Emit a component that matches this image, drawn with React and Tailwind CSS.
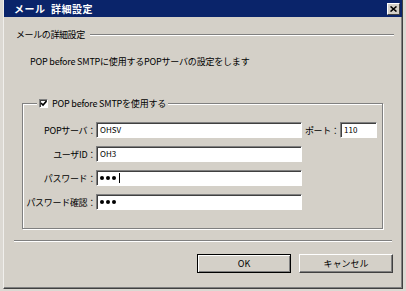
import React from "react";

const font = { fontFamily: '"Noto Sans CJK JP", "Noto Sans", sans-serif' };

function Field({ children, className = "" }) {
    return (
        <div className={`h-[16px] bg-white border-t border-l border-[#808080] border-b border-r border-b-white border-r-white shadow-[inset_1px_1px_0_#404040] flex items-center pl-[3px] text-[8px] leading-none ${className}`}>
            {children}
        </div>
    );
}

function Row({ label, children }) {
    return (
        <div className="flex items-center">
            <div className="w-[73px] text-right text-[9px] leading-none tracking-[-0.3px] whitespace-nowrap">{label}</div>
            {children}
        </div>
    );
}

function Dots({ caret }) {
    return (
        <span className="flex items-center gap-[2px]">
            <span className="w-[4px] h-[4px] rounded-full bg-black" />
            <span className="w-[4px] h-[4px] rounded-full bg-black" />
            <span className="w-[4px] h-[4px] rounded-full bg-black" />
            {caret && <span className="w-[1px] h-[10px] bg-black ml-[1px]" />}
        </span>
    );
}

function Button({ children, primary }) {
    return (
        <button
            className={`w-[94px] h-[19px] bg-[#d4d0c8] text-[9px] leading-none flex items-center justify-center ${primary
                ? "border border-black shadow-[inset_1px_1px_0_white,inset_-1px_-1px_0_#808080]"
                : "border-t border-l border-white border-b border-r border-b-[#404040] border-r-[#404040] shadow-[inset_-1px_-1px_0_#808080]"
                }`}
        >
            {children}
        </button>
    );
}

export default function App() {
    return (
        <div className="w-[406px] h-[291px] bg-[#dcd9d3] px-[3px] pb-[2px] text-black" style={font}>
            <div className="h-full flex flex-col bg-[#d4d0c8] border-l border-r border-b border-l-[#f0efec] border-r-[#404040] border-b-[#404040] shadow-[inset_-1px_-1px_0_#808080]">
                {/* title bar */}
                <div className="h-[17px] bg-[#0a246a] flex items-center justify-between pl-[10px] pr-[2px] shrink-0">
                    <span className="text-white font-bold text-[10px] leading-none tracking-[0.5px] whitespace-nowrap">メール&nbsp;&nbsp;詳細設定</span>
                    <div className="w-[13px] h-[12px] bg-[#d4d0c8] border-t border-l border-white border-b border-r border-b-[#404040] border-r-[#404040] flex items-center justify-center">
                        <svg width="7" height="6" viewBox="0 0 7 6">
                            <path d="M0.5 0.5 L6.5 5.5 M6.5 0.5 L0.5 5.5" stroke="black" strokeWidth="1.6" />
                        </svg>
                    </div>
                </div>

                {/* heading */}
                <div className="flex items-center pl-[12px] pr-[8px] mt-[12px]">
                    <span className="text-[9px] leading-[12px] tracking-[-0.4px] whitespace-nowrap">メールの詳細設定</span>
                    <div className="flex-1 ml-[5px] h-[2px] border-t border-[#808080] border-b border-b-white" />
                </div>

                <div className="pl-[26px] mt-[15px] text-[9px] leading-[12px] tracking-[-0.2px] whitespace-nowrap">
                    POP before SMTPに使用するPOPサーバの設定をします
                </div>

                {/* group box */}
                <div className="ml-[18px] mr-[19px] mt-[35px] h-[126px] border border-[#808080] shadow-[inset_1px_1px_0_white,1px_1px_0_white] flex flex-col">
                    <div className="-mt-[7px] ml-[14px] self-start bg-[#d4d0c8] flex items-center px-[2px] h-[12px]">
                        <div className="w-[9px] h-[9px] bg-white border-t border-l border-[#808080] border-b border-r border-b-white border-r-white shadow-[inset_1px_1px_0_#404040] flex items-center justify-center">
                            <svg width="7" height="7" viewBox="0 0 7 7">
                                <path d="M1 3 L3 5 L6.5 1" stroke="black" strokeWidth="1.6" fill="none" />
                            </svg>
                        </div>
                        <span className="ml-[4px] text-[9px] leading-none tracking-[-0.2px] whitespace-nowrap">POP before SMTPを使用する</span>
                    </div>

                    <div className="mt-[13px] flex flex-col gap-[8px]">
                        <Row label="POPサーバ：">
                            <Field className="w-[206px]">OHSV</Field>
                            <span className="ml-[3px] w-[35px] text-[9px] leading-none whitespace-nowrap tracking-[-0.4px]">ポート：</span>
                            <Field className="w-[37px]">110</Field>
                        </Row>
                        <Row label="ユーザID：">
                            <Field className="w-[206px]">OH3</Field>
                        </Row>
                        <Row label="パスワード：">
                            <Field className="w-[206px]"><Dots caret /></Field>
                        </Row>
                        <Row label="パスワード確認：">
                            <Field className="w-[206px]"><Dots /></Field>
                        </Row>
                    </div>
                </div>

                {/* separator */}
                <div className="mx-[10px] mt-[11px] h-[2px] border-t border-[#808080] border-b border-b-white" />

                <div className="flex justify-end gap-[8px] pr-[9px] mt-[12px]">
                    <Button primary>OK</Button>
                    <Button>キャンセル</Button>
                </div>
            </div>
        </div>
    );
}
